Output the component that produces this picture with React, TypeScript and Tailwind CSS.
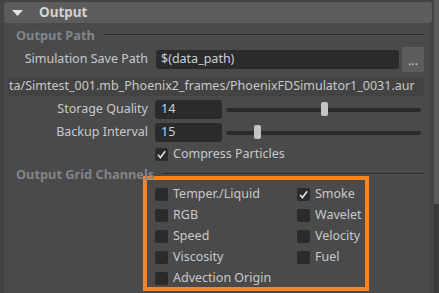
import React from "react";

const FONT = { fontFamily: '"Noto Sans", "Open Sans", sans-serif' };

function Check({ on }: { on?: boolean }) {
  return (
    <div className="w-[13px] h-[13px] rounded-[2px] bg-[#2b2b2b] flex items-center justify-center shrink-0">
      {on && (
        <svg width="13" height="13" viewBox="0 0 13 13">
          <polyline points="3,6.8 5.4,9.6 10.2,3.2" fill="none" stroke="#dcdcdc" strokeWidth="1.6" />
        </svg>
      )}
    </div>
  );
}

function Heading({ text, lineFrom }: { text: string; lineFrom: number }) {
  return (
    <div className="flex items-center h-[20px]">
      <span className="pl-[12px] text-[12.8px] font-bold text-[#80858a] whitespace-nowrap leading-none">{text}</span>
      <div className="h-[2px] border-t border-[#2c2c2c] border-b border-b-[#505050] mr-[4px] ml-auto" style={{ width: 426 - lineFrom }} />
    </div>
  );
}

function SliderRow({ label, value, pos }: { label: string; value: string; pos: number }) {
  return (
    <div className="flex items-center h-[19px] mt-[4px]">
      <div className="w-[144px] flex justify-end text-[#c6c9cc] whitespace-nowrap">{label}</div>
      <div className="ml-[7px] w-[67px] h-[19px] rounded-[3px] bg-[#2b2b2b] pl-[6px] flex items-center text-[#cfcfcf]">{value}</div>
      <div className="relative ml-[4px] w-[195px] h-[4px] rounded-full bg-[#2b2b2b]">
        <div className="absolute top-[-6px] w-[7px] h-[14px] rounded-[2px] bg-[#c4c4c4]" style={{ left: pos }} />
      </div>
    </div>
  );
}

const LEFT = ["Temper./Liquid", "RGB", "Speed", "Viscosity", "Advection Origin"];
const RIGHT: [string, boolean][] = [["Smoke", true], ["Wavelet", false], ["Velocity", false], ["Fuel", false]];

export default function App() {
  return (
    <div className="w-[439px] h-[293px] bg-[#444444] flex overflow-hidden text-[12.5px]" style={FONT}>
      <div className="w-[434px] flex flex-col">
        {/* section header */}
        <div className="mt-[2px] ml-[4px] w-[428px] h-[21px] rounded-[3px] bg-[#5c5c5c] flex items-center">
          <svg width="11" height="6" viewBox="0 0 11 6" className="ml-[8px]">
            <polygon points="0,0 11,0 5.5,6" fill="#e2e2e2" />
          </svg>
          <span className="ml-[16px] font-bold text-[13.5px] text-[#d2d2d2]">Output</span>
        </div>

        {/* body */}
        <div className="ml-[2px] w-[428px] flex-1 bg-[#4a4a4a] border-l-2 border-[#424242]">
          <div className="w-[424px] mt-[2px]">
            <Heading text="Output Path" lineFrom={105} />

            <div className="flex items-center h-[25px] mt-[2px]">
              <div className="w-[144px] flex justify-end text-[#c6c9cc] whitespace-nowrap">Simulation Save Path</div>
              <div className="ml-[8px] w-[243px] h-[19px] rounded-[3px] bg-[#2b2b2b] pl-[5px] flex items-center text-[#cfcfcf]">$(data_path)</div>
              <div className="ml-[3px] w-[22px] h-[25px] bg-[#5d5d5d] flex items-end justify-center pb-[5px] text-[#d4d4d4] leading-none">...</div>
            </div>

            <div className="mt-[5px] ml-[4px] w-[416px] h-[19px] rounded-[3px] bg-[#434343] pl-[1px] flex items-center overflow-hidden whitespace-nowrap text-[#c6c9cc]">
              ta/Simtest_001.mb_Phoenix2_frames/PhoenixFDSimulator1_0031.aur
            </div>

            <SliderRow label="Storage Quality" value="14" pos={95} />
            <SliderRow label="Backup Interval" value="15" pos={28} />

            <div className="flex items-center h-[13px] mt-[6px] ml-[151px]">
              <Check on />
              <span className="ml-[5px] text-[#c6c9cc] whitespace-nowrap">Compress Particles</span>
            </div>

            <div className="mt-[3px]">
              <Heading text="Output Grid Channels" lineFrom={165} />
            </div>

            <div className="-mt-[8px] ml-[139px] w-[226px] h-[115px] border-4 border-[#fb8520] pl-[8px] pt-[8px] grid grid-cols-[142px_1fr]">
              <div className="flex flex-col gap-[8px]">
                {LEFT.map(l => (
                  <div key={l} className="flex items-center h-[13px]">
                    <Check />
                    <span className="ml-[5px] text-[#c6c9cc] whitespace-nowrap">{l}</span>
                  </div>
                ))}
              </div>
              <div className="flex flex-col gap-[8px]">
                {RIGHT.map(([l, on]) => (
                  <div key={l} className="flex items-center h-[13px]">
                    <Check on={on} />
                    <span className="ml-[5px] text-[#c6c9cc] whitespace-nowrap">{l}</span>
                  </div>
                ))}
              </div>
            </div>
          </div>
        </div>
      </div>

      {/* scrollbar */}
      <div className="w-[5px] flex flex-col">
        <div className="h-[204px] bg-[#5c5c5c]" />
        <div className="flex-1 bg-[#393939]" />
      </div>
    </div>
  );
}
